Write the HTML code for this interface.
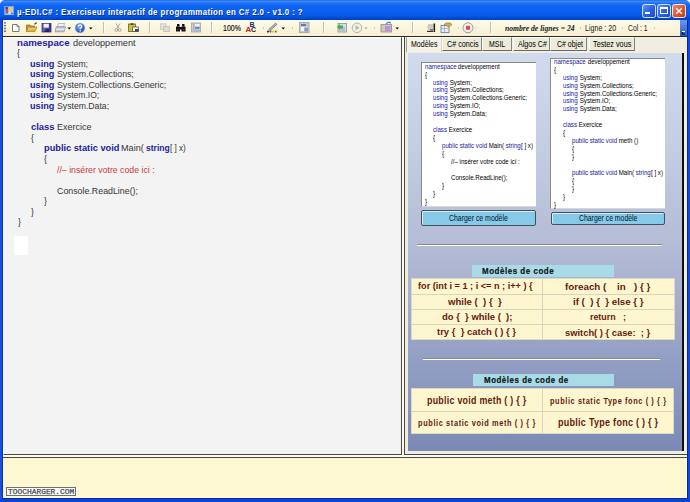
<!DOCTYPE html>
<html><head><meta charset="utf-8">
<style>
*{margin:0;padding:0;box-sizing:border-box}
html,body{width:690px;height:502px;overflow:hidden;background:#0b44d6}
body{position:relative;font-family:"Liberation Sans",sans-serif}
.a{position:absolute}
.t{position:absolute;white-space:pre;transform-origin:0 0}
#title{left:0;top:0;width:690px;height:20px;background:linear-gradient(#0c5ad8 0px,#4490fa 1px,#2472f6 3px,#0e64f2 6px,#0a5eee 12px,#0658e8 16px,#004ad4 18px,#003ec0 20px)}
#toolbar{left:3px;top:20px;width:684px;height:16px;background:linear-gradient(#fefbec,#fcf5dc 50%,#f8efd2)}
#tbline{left:3px;top:36px;width:684px;height:1px;background:#2a2a2a}
#editor{left:3px;top:37px;width:399px;height:418px;background:#f3f3f3;border-right:1px solid #4a4a40;border-bottom:1px solid #4a4a40;border-left:1px solid #fff;border-top:1px solid #fff}
#split{left:402px;top:37px;width:2px;height:418px;background:#fbfbf4}
#panelc{left:404px;top:37px;width:283px;height:418px;background:#f1ede0;border-left:1px solid #4a4a40;border-bottom:1px solid #4a4a40}
#bline1{left:3px;top:455px;width:684px;height:2px;background:#fbfbf4}
#bline2{left:3px;top:457px;width:684px;height:1px;background:#4a4a40}
#bottom{left:3px;top:458px;width:684px;height:40px;background:#fdf7d2}
#blue{left:408px;top:53px;width:274px;height:398px;background:linear-gradient(#d2daee 0%,#c4cce2 25%,#b4bcd6 48%,#94a0c4 76%,#7b89b5 100%)}
#rline{left:682px;top:53px;width:2px;height:398px;background:#101010}
#wcur{left:14px;top:236px;width:14px;height:19px;background:#fff}
.tab{position:absolute;top:37px;height:14px;background:#ecead8;border-left:1px solid #fdfdf8;border-top:1px solid #fdfdf8;border-right:1px solid #85837a;border-bottom:1px solid #6e6c62}
.card{position:absolute;background:#fff;border-left:1px solid #8a8a8a;border-top:1px solid #8a8a8a;border-bottom:1px solid #d4d8e4;overflow:hidden}
.btn{position:absolute;background:#86c9e8;border:1px solid #40505e;border-radius:2px;box-shadow:inset 1px 1px 0 #d4eef8}
.sep{position:absolute;height:2px;border-top:1px solid #8a8a8a;border-bottom:1px solid #fff}
.lbl{position:absolute;background:#a9dbe6}
.tbl{position:absolute;background:#fef6cf;border:1px solid #dcd8c8}
.hl{position:absolute;height:1px;background:#d8d4c0}
.vl{position:absolute;width:1px;background:#d8d4c0}
#wm{left:6px;top:487px;width:70px;height:8.5px;background:#fff;border:1px solid #707070}
</style></head><body>
<div id="title" class="a"></div>
<div id="toolbar" class="a"></div>
<div id="tbline" class="a"></div>
<svg class="a" style="left:0;top:0" width="690" height="40" viewBox="0 0 690 40">
<defs>
<linearGradient id="gmin" x1="0" y1="0" x2="1" y2="1"><stop offset="0" stop-color="#6a9af8"/><stop offset="0.5" stop-color="#2a62e8"/><stop offset="1" stop-color="#1a48c8"/></linearGradient>
<linearGradient id="gcls" x1="0" y1="0" x2="1" y2="1"><stop offset="0" stop-color="#f08a68"/><stop offset="0.5" stop-color="#e05a34"/><stop offset="1" stop-color="#c83a18"/></linearGradient>
<radialGradient id="ghelp" cx="0.4" cy="0.35" r="0.7"><stop offset="0" stop-color="#8ab4f8"/><stop offset="0.6" stop-color="#3468d0"/><stop offset="1" stop-color="#2a4aa0"/></radialGradient>
<linearGradient id="gchev" x1="0" y1="0" x2="0" y2="1"><stop offset="0" stop-color="#6a98f0"/><stop offset="1" stop-color="#2a58c8"/></linearGradient>
<linearGradient id="gfold" x1="0" y1="0" x2="0" y2="1"><stop offset="0" stop-color="#f8dc80"/><stop offset="1" stop-color="#d8a030"/></linearGradient>
</defs>
<!-- rounded title corners -->
<path d="M0 0H4Q1 0.5 0 4Z" fill="#fff"/>
<path d="M690 0H686Q689 0.5 690 4Z" fill="#fff"/>
<!-- app icon -->
<rect x="4.3" y="6.3" width="9.4" height="8.6" fill="#a8c4f0"/>
<rect x="5.3" y="7" width="2.8" height="2" fill="#3a4aa0"/>
<rect x="5.5" y="9" width="2.6" height="4.5" fill="#a85a60"/>
<circle cx="10.6" cy="9.2" r="2.1" fill="#f0c860"/>
<rect x="8.6" y="11.5" width="4.4" height="2.6" fill="#c8dcf4"/>
<rect x="11" y="12.5" width="2" height="1.5" fill="#5a7ab8"/>
<!-- caption buttons -->
<rect x="642.5" y="4.5" width="13" height="13" rx="2" fill="url(#gmin)" stroke="#d4e2fc" stroke-width="1"/>
<rect x="645" y="12" width="5" height="2" fill="#fff"/>
<rect x="657.5" y="4.5" width="13" height="13" rx="2" fill="url(#gmin)" stroke="#d4e2fc" stroke-width="1"/>
<rect x="660.5" y="7.5" width="7" height="6" fill="none" stroke="#fff" stroke-width="1"/>
<rect x="660" y="7" width="8" height="2" fill="#fff"/>
<rect x="672.5" y="4.5" width="13" height="13" rx="2" fill="url(#gcls)" stroke="#f4e8e8" stroke-width="1"/>
<path d="M676.2 8.2L681.8 13.8M681.8 8.2L676.2 13.8" stroke="#fff" stroke-width="1.4"/>
<!-- chevron -->
<rect x="680" y="20" width="7" height="16" fill="url(#gchev)"/>
<path d="M681.5 33.5L684 31M682 34h3" stroke="#000" stroke-width="1"/>
<rect x="682" y="31" width="3" height="1" fill="#fff"/>
<!-- grip -->
<g fill="#5e5e58"><circle cx="5" cy="22.8" r="0.9"/><circle cx="5" cy="25.6" r="0.9"/><circle cx="5" cy="28.4" r="0.9"/><circle cx="5" cy="31.2" r="0.9"/></g>
<!-- new doc -->
<path d="M12.5 24.5H17L19 26.5V31.5H12.5Z" fill="#fbfbff" stroke="#7a7a80"/>
<path d="M17 24.5V26.5H19" fill="none" stroke="#7a7a80"/>
<!-- open folder -->
<path d="M26.5 31.5V25H30L31 26H34.5V28" fill="#c89838" stroke="#987020" stroke-width="0.8"/>
<path d="M26.3 31.6L28.2 27.2H37L34.8 31.6Z" fill="url(#gfold)" stroke="#b08028" stroke-width="0.8"/>
<path d="M34.5 24.2L36.8 22.6" stroke="#303030" stroke-width="1.1"/>
<!-- save -->
<rect x="42" y="23.4" width="9" height="8.6" fill="#5c5cb4" stroke="#303078" stroke-width="0.8"/>
<rect x="49.3" y="23.8" width="1.4" height="8" fill="#303080"/>
<rect x="43.6" y="23.8" width="5.2" height="3.8" fill="#f0f0fc"/>
<path d="M44 32L46.5 28.8H49V32Z" fill="#24245e"/>
<!-- printer -->
<path d="M58.5 23.5H64.8L63.2 26.8H57Z" fill="#f4f4f8" stroke="#9aa0b0" stroke-width="0.7"/>
<path d="M56.2 26.8H65.6L64.2 31.8H55Z" fill="#c0c4d0" stroke="#8a90a4" stroke-width="0.7"/>
<path d="M56.4 28.6H64.6L64.2 30H56Z" fill="#e8eaf0"/>
<path d="M67.5 27.5H71L69.25 29.5Z" fill="#000"/>
<!-- help -->
<circle cx="80" cy="28" r="4.8" fill="url(#ghelp)" stroke="#8aa8e0" stroke-width="0.6"/>
<path d="M78.3 26.5Q78.5 24.8 80.2 24.8Q82 25 81.8 26.6Q81.5 27.7 80.2 28.3V29.2" fill="none" stroke="#fff" stroke-width="1.2"/>
<rect x="79.6" y="30.2" width="1.3" height="1.3" fill="#fff"/>
<path d="M89 27.5H92.5L90.75 29.5Z" fill="#000"/>
<!-- separators -->
<g fill="#c4c0ac"><rect x="103" y="22" width="1" height="11"/><rect x="149" y="22" width="1" height="11"/><rect x="211" y="22" width="1" height="11"/><rect x="323" y="22" width="1" height="11"/><rect x="412" y="22" width="1" height="11"/><rect x="490" y="22" width="1" height="11"/></g>
<g fill="#fff"><rect x="104" y="22" width="1" height="11"/><rect x="150" y="22" width="1" height="11"/><rect x="212" y="22" width="1" height="11"/><rect x="324" y="22" width="1" height="11"/><rect x="413" y="22" width="1" height="11"/><rect x="491" y="22" width="1" height="11"/></g>
<g fill="#d0ccc0"><rect x="263" y="27" width="1" height="2"/><rect x="292" y="27" width="1" height="2"/><rect x="374" y="27" width="1" height="2"/><rect x="458" y="27" width="1" height="2"/><rect x="580" y="27" width="1" height="2"/><rect x="622" y="27" width="1" height="2"/><rect x="654" y="27" width="1" height="2"/></g>
<!-- scissors grayed -->
<g fill="none" stroke="#a8a8a0" stroke-width="1"><path d="M116 23.5L119 28.5M120 23.5L117 28.5"/><circle cx="116.3" cy="30" r="1.4"/><circle cx="119.7" cy="30" r="1.4"/></g>
<!-- paste -->
<rect x="128.5" y="24" width="7" height="7.5" fill="#d4c040" stroke="#6a6020" stroke-width="0.8"/>
<rect x="130.5" y="23.3" width="3" height="1.6" fill="#404040"/>
<rect x="132.5" y="27" width="6" height="4.5" fill="#fff" stroke="#505060" stroke-width="0.8"/>
<rect x="135" y="29" width="3.5" height="2.5" fill="#3a4a3a"/>
<!-- copy grayed -->
<rect x="160.5" y="23.8" width="5.5" height="5.5" fill="#e4e4dc" stroke="#c4c4bc" stroke-width="0.8"/>
<rect x="163.5" y="26.5" width="6" height="5" fill="#dcdcd4" stroke="#c0c0b8" stroke-width="0.8"/>
<!-- binoculars -->
<g fill="#101010"><rect x="177" y="24" width="2.5" height="2.5"/><rect x="182" y="24" width="2.5" height="2.5"/><rect x="176" y="26.5" width="4" height="5"/><rect x="181.5" y="26.5" width="4" height="5"/><rect x="179.5" y="27" width="2.5" height="2.5"/></g>
<rect x="177" y="29" width="1.2" height="1.2" fill="#505050"/><rect x="183" y="29" width="1.2" height="1.2" fill="#505050"/>
<!-- doc icon -->
<rect x="191.5" y="23" width="9" height="9" fill="#c8ccd8" stroke="#9ea2b0" stroke-width="0.8"/>
<rect x="193" y="24" width="1.5" height="7" fill="#d8a8b0"/>
<rect x="195" y="24" width="4.5" height="2" fill="#f0f4ff"/><rect x="195" y="27" width="4.5" height="2" fill="#7a8aa8"/><rect x="195" y="30" width="4.5" height="1.5" fill="#9ab8d8"/>
<!-- ABC -->
<text x="245.5" y="31.5" font-family="Liberation Sans" font-weight="bold" font-size="8" fill="#c02020">A</text>
<text x="249.5" y="27" font-family="Liberation Sans" font-weight="bold" font-size="7" fill="#1a2a6a">B</text>
<text x="251" y="32" font-family="Liberation Sans" font-weight="bold" font-size="7" fill="#1a1a2a">C</text>
<!-- brush -->
<path d="M276.5 23.5L269 30.5" stroke="#8a8a90" stroke-width="2.4"/>
<path d="M276.5 23.5L269 30.5" stroke="#d0d0d8" stroke-width="0.8"/>
<circle cx="268" cy="31.6" r="1.1" fill="#2a3a7a"/><circle cx="270.5" cy="31.6" r="1.1" fill="#c03a4a"/><circle cx="273" cy="31.6" r="1.1" fill="#e8c020"/><circle cx="275.8" cy="31.6" r="1.1" fill="#30a030"/>
<path d="M281.5 27.5H285L283.25 29.5Z" fill="#000"/>
<!-- doc icon 2 -->
<rect x="299.5" y="22.5" width="9.5" height="10" fill="#c4cad8" stroke="#98a0b0" stroke-width="0.8"/>
<rect x="301" y="24" width="5" height="2" fill="#687898"/><rect x="301" y="27" width="3" height="4" fill="#f4f6ff"/><rect x="304.5" y="28" width="3.5" height="3.5" fill="#889ab8"/>
<!-- green arrow doc -->
<rect x="338" y="23.5" width="8.5" height="8.5" fill="#d8dce8" stroke="#8a90a0" stroke-width="0.8"/>
<rect x="339.5" y="27" width="5.5" height="4" fill="#b8c0d0"/>
<path d="M337 27L340 24V25.5H343V28.5H340V30Z" fill="#40b040"/>
<!-- play grayed -->
<circle cx="357" cy="27.8" r="4.8" fill="#f0eee4" stroke="#b4b4ac" stroke-width="1"/>
<path d="M355.5 25.3L359.5 27.8L355.5 30.3Z" fill="#b8b8b0"/>
<path d="M364.5 27.5H367.5L366 29.3Z" fill="#a0a0a0"/>
<!-- purple icon -->
<rect x="381" y="24.5" width="10.5" height="7.5" fill="#c8c8d0" stroke="#8a8a9a" stroke-width="0.8"/>
<rect x="385" y="26" width="5.5" height="5" fill="#c090d8"/>
<circle cx="383.5" cy="28" r="1.2" fill="#f0d030"/>
<path d="M386 24Q388 21.5 391 23" fill="none" stroke="#3a7ad8" stroke-width="1.2"/>
<path d="M395.5 27.5H399L397.25 29.5Z" fill="#000"/>
<!-- lines icon -->
<g fill="#a0a0b0"><rect x="428" y="24.5" width="5" height="1"/><rect x="427" y="26.5" width="6" height="1"/><rect x="428" y="28.5" width="5" height="1"/></g>
<g fill="#202020"><rect x="427" y="30.8" width="6" height="1.1"/><rect x="433.5" y="23.5" width="1.6" height="8.5"/><rect x="430" y="29.5" width="3" height="0.8"/></g>
<!-- grid icon -->
<rect x="441" y="25.5" width="8" height="7" fill="#e8eef8" stroke="#5a78a8" stroke-width="0.8"/>
<path d="M441 28.5H449M444.5 25.5V32.5" stroke="#8aa0c8" stroke-width="0.7"/>
<path d="M444 24.5Q446 22 450 23L452 24.5L449 27Z" fill="#d8b040" stroke="#907020" stroke-width="0.6"/>
<!-- stop -->
<circle cx="468" cy="27.8" r="5" fill="#f4f0e6" stroke="#9a9a94" stroke-width="1"/>
<rect x="466" y="25.8" width="4" height="4" fill="#e04868"/>
</svg>

<div id="editor" class="a"></div>
<div id="wcur" class="a"></div>
<div id="split" class="a"></div>
<div id="panelc" class="a"></div>
<div class="tab" style="left:406px;width:36px;height:15px;background:#f4f2e6;border-bottom:none;border-left:1px solid #a4a496;border-right:1px solid #d8d6c8"></div>
<div class="tab" style="left:442px;width:40px"></div>
<div class="tab" style="left:482px;width:30px"></div>
<div class="tab" style="left:513px;width:37px"></div>
<div class="tab" style="left:550px;width:37px"></div>
<div class="tab" style="left:589px;width:46px"></div>
<div id="blue" class="a"></div>
<div id="rline" class="a"></div>
<div class="card" style="left:421px;top:62px;width:115px;height:145px"></div>
<div class="card" style="left:550px;top:58px;width:115px;height:151px"></div>
<div class="btn" style="left:421px;top:210px;width:115px;height:15.5px"></div>
<div class="btn" style="left:551px;top:212px;width:114px;height:13px"></div>
<div class="sep" style="left:417px;top:244px;width:245px"></div>
<div class="sep" style="left:423px;top:358px;width:237px"></div>
<div class="lbl" style="left:472px;top:265px;width:142px;height:12px"></div>
<div class="lbl" style="left:473px;top:374px;width:141px;height:12px"></div>
<div class="tbl" style="left:411px;top:278px;width:264px;height:62px"></div>
<div class="hl" style="left:412px;top:294px;width:262px"></div>
<div class="hl" style="left:412px;top:309px;width:262px"></div>
<div class="hl" style="left:412px;top:324px;width:262px"></div>
<div class="vl" style="left:542px;top:279px;height:60px"></div>
<div class="tbl" style="left:411px;top:388px;width:263px;height:46px"></div>
<div class="hl" style="left:412px;top:411px;width:261px"></div>
<div class="vl" style="left:542px;top:389px;height:44px"></div>
<div id="bline1" class="a"></div>
<div id="bline2" class="a"></div>
<div id="bottom" class="a"></div>
<div id="wm" class="a"></div>
<div class="a" style="left:0;top:20px;width:2px;height:482px;background:#1a4ee2"></div>
<div class="a" style="left:2px;top:20px;width:1px;height:480px;background:#0636b8"></div>
<div class="a" style="left:688px;top:20px;width:2px;height:482px;background:#1446d8"></div>
<div class="a" style="left:687px;top:20px;width:1px;height:479px;background:#0228a6"></div>
<div class="a" style="left:2px;top:498px;width:686px;height:1px;background:#0228a6"></div>
<div class="a" style="left:0;top:499px;width:690px;height:3px;background:#1042d4"></div>
<div class="a" style="left:3px;top:497px;width:684px;height:1px;background:#fdfbee"></div>
<div class="a" style="left:686px;top:458px;width:1px;height:40px;background:#fdfbee"></div>
<div class="t" style="left:16.80px;top:6.80px;line-height:9.5px;font-family:'Liberation Sans';font-size:9.5px;font-weight:bold;font-style:normal;letter-spacing:0.5px;color:#fff;transform:scaleX(0.8275);text-shadow:1px 1px 0 #0a3090;">µ-EDI.C# : Exerciseur interactif de programmation en C# 2.0 - v1.0 : ?</div>
<div class="t" style="left:222.80px;top:23.80px;line-height:8.5px;font-family:'Liberation Sans';font-size:8.5px;font-weight:normal;font-style:normal;letter-spacing:0px;color:#111111;transform:scaleX(0.8276);-webkit-text-stroke:0.15px #111;">100%</div>
<div class="t" style="left:504.60px;top:24.00px;line-height:9px;font-family:'Liberation Serif';font-size:9px;font-weight:bold;font-style:italic;letter-spacing:0px;color:#202020;transform:scaleX(0.8473);">nombre de lignes = 24</div>
<div class="t" style="left:584.80px;top:23.60px;line-height:8.5px;font-family:'Liberation Sans';font-size:8.5px;font-weight:normal;font-style:normal;letter-spacing:0px;color:#222222;transform:scaleX(0.8355);">Ligne : 20</div>
<div class="t" style="left:627.80px;top:23.60px;line-height:8.5px;font-family:'Liberation Sans';font-size:8.5px;font-weight:normal;font-style:normal;letter-spacing:0px;color:#222222;transform:scaleX(0.7975);">Col : 1</div>
<div class="t" style="left:17.40px;top:37.60px;line-height:9.5px;font-family:'Liberation Sans';font-size:9.5px;font-weight:bold;font-style:normal;letter-spacing:0px;color:#22229c;transform:scaleX(1.0161);">namespace</div>
<div class="t" style="left:73.00px;top:37.60px;line-height:9.5px;font-family:'Liberation Sans';font-size:9.5px;font-weight:normal;font-style:normal;letter-spacing:0px;color:#363636;transform:scaleX(0.9635);">developpement</div>
<div class="t" style="left:17.40px;top:48.17px;line-height:9.5px;font-family:'Liberation Sans';font-size:9.5px;font-weight:normal;font-style:normal;letter-spacing:0px;color:#363636;transform:scaleX(0.9200);">{</div>
<div class="t" style="left:30.40px;top:58.74px;line-height:9.5px;font-family:'Liberation Sans';font-size:9.5px;font-weight:bold;font-style:normal;letter-spacing:0px;color:#22229c;transform:scaleX(0.9628);">using</div>
<div class="t" style="left:57.00px;top:58.74px;line-height:9.5px;font-family:'Liberation Sans';font-size:9.5px;font-weight:normal;font-style:normal;letter-spacing:0px;color:#363636;transform:scaleX(0.9005);">System;</div>
<div class="t" style="left:30.40px;top:69.31px;line-height:9.5px;font-family:'Liberation Sans';font-size:9.5px;font-weight:bold;font-style:normal;letter-spacing:0px;color:#22229c;transform:scaleX(0.9628);">using</div>
<div class="t" style="left:57.00px;top:69.31px;line-height:9.5px;font-family:'Liberation Sans';font-size:9.5px;font-weight:normal;font-style:normal;letter-spacing:0px;color:#363636;transform:scaleX(0.9206);">System.Collections;</div>
<div class="t" style="left:30.40px;top:79.88px;line-height:9.5px;font-family:'Liberation Sans';font-size:9.5px;font-weight:bold;font-style:normal;letter-spacing:0px;color:#22229c;transform:scaleX(0.9628);">using</div>
<div class="t" style="left:57.00px;top:79.88px;line-height:9.5px;font-family:'Liberation Sans';font-size:9.5px;font-weight:normal;font-style:normal;letter-spacing:0px;color:#363636;transform:scaleX(0.9151);">System.Collections.Generic;</div>
<div class="t" style="left:30.40px;top:90.45px;line-height:9.5px;font-family:'Liberation Sans';font-size:9.5px;font-weight:bold;font-style:normal;letter-spacing:0px;color:#22229c;transform:scaleX(0.9628);">using</div>
<div class="t" style="left:57.00px;top:90.45px;line-height:9.5px;font-family:'Liberation Sans';font-size:9.5px;font-weight:normal;font-style:normal;letter-spacing:0px;color:#363636;transform:scaleX(0.8982);">System.IO;</div>
<div class="t" style="left:30.40px;top:101.02px;line-height:9.5px;font-family:'Liberation Sans';font-size:9.5px;font-weight:bold;font-style:normal;letter-spacing:0px;color:#22229c;transform:scaleX(0.9628);">using</div>
<div class="t" style="left:57.00px;top:101.02px;line-height:9.5px;font-family:'Liberation Sans';font-size:9.5px;font-weight:normal;font-style:normal;letter-spacing:0px;color:#363636;transform:scaleX(0.9135);">System.Data;</div>
<div class="t" style="left:30.80px;top:122.16px;line-height:9.5px;font-family:'Liberation Sans';font-size:9.5px;font-weight:bold;font-style:normal;letter-spacing:0px;color:#22229c;transform:scaleX(0.9924);">class</div>
<div class="t" style="left:56.80px;top:122.16px;line-height:9.5px;font-family:'Liberation Sans';font-size:9.5px;font-weight:normal;font-style:normal;letter-spacing:0px;color:#363636;transform:scaleX(0.9441);">Exercice</div>
<div class="t" style="left:30.80px;top:132.73px;line-height:9.5px;font-family:'Liberation Sans';font-size:9.5px;font-weight:normal;font-style:normal;letter-spacing:0px;color:#363636;transform:scaleX(0.9200);">{</div>
<div class="t" style="left:44.20px;top:143.30px;line-height:9.5px;font-family:'Liberation Sans';font-size:9.5px;font-weight:bold;font-style:normal;letter-spacing:0px;color:#22229c;transform:scaleX(0.9715);">public static void</div>
<div class="t" style="left:121.20px;top:143.30px;line-height:9.5px;font-family:'Liberation Sans';font-size:9.5px;font-weight:normal;font-style:normal;letter-spacing:0px;color:#363636;transform:scaleX(0.9594);">Main(</div>
<div class="t" style="left:146.30px;top:143.30px;line-height:9.5px;font-family:'Liberation Sans';font-size:9.5px;font-weight:bold;font-style:normal;letter-spacing:0px;color:#22229c;transform:scaleX(0.8980);">string</div>
<div class="t" style="left:170.40px;top:143.30px;line-height:9.5px;font-family:'Liberation Sans';font-size:9.5px;font-weight:normal;font-style:normal;letter-spacing:0px;color:#363636;transform:scaleX(0.8548);">[ ] x)</div>
<div class="t" style="left:44.20px;top:153.87px;line-height:9.5px;font-family:'Liberation Sans';font-size:9.5px;font-weight:normal;font-style:normal;letter-spacing:0px;color:#363636;transform:scaleX(0.9200);">{</div>
<div class="t" style="left:57.20px;top:164.84px;line-height:9.5px;font-family:'Liberation Sans';font-size:9.5px;font-weight:normal;font-style:normal;letter-spacing:0px;color:#c83a3a;transform:scaleX(0.9195);">//– insérer votre code ici :</div>
<div class="t" style="left:56.80px;top:185.58px;line-height:9.5px;font-family:'Liberation Sans';font-size:9.5px;font-weight:normal;font-style:normal;letter-spacing:0px;color:#363636;transform:scaleX(0.9295);">Console.ReadLine();</div>
<div class="t" style="left:44.20px;top:196.15px;line-height:9.5px;font-family:'Liberation Sans';font-size:9.5px;font-weight:normal;font-style:normal;letter-spacing:0px;color:#363636;transform:scaleX(0.9200);">}</div>
<div class="t" style="left:30.80px;top:206.72px;line-height:9.5px;font-family:'Liberation Sans';font-size:9.5px;font-weight:normal;font-style:normal;letter-spacing:0px;color:#363636;transform:scaleX(0.9200);">}</div>
<div class="t" style="left:17.60px;top:217.29px;line-height:9.5px;font-family:'Liberation Sans';font-size:9.5px;font-weight:normal;font-style:normal;letter-spacing:0px;color:#363636;transform:scaleX(0.9200);">}</div>
<div class="t" style="left:7.60px;top:487.80px;line-height:8px;font-family:'Liberation Mono';font-size:8px;font-weight:normal;font-style:normal;letter-spacing:0px;color:#484848;transform:scaleX(0.9863);-webkit-text-stroke:0.25px #484848;">TOOCHARGER.COM</div>
<div class="t" style="left:410.90px;top:39.50px;line-height:9px;font-family:'Liberation Sans';font-size:9px;font-weight:normal;font-style:normal;letter-spacing:0px;color:#000000;transform:scaleX(0.7787);">Modèles</div>
<div class="t" style="left:447.00px;top:39.50px;line-height:9px;font-family:'Liberation Sans';font-size:9px;font-weight:normal;font-style:normal;letter-spacing:0px;color:#000000;transform:scaleX(0.7997);">C# concis</div>
<div class="t" style="left:488.70px;top:39.50px;line-height:9px;font-family:'Liberation Sans';font-size:9px;font-weight:normal;font-style:normal;letter-spacing:0px;color:#000000;transform:scaleX(0.7709);">MSIL</div>
<div class="t" style="left:518.30px;top:39.50px;line-height:9px;font-family:'Liberation Sans';font-size:9px;font-weight:normal;font-style:normal;letter-spacing:0px;color:#000000;transform:scaleX(0.7938);">Algos C#</div>
<div class="t" style="left:557.00px;top:39.50px;line-height:9px;font-family:'Liberation Sans';font-size:9px;font-weight:normal;font-style:normal;letter-spacing:0px;color:#000000;transform:scaleX(0.7754);">C# objet</div>
<div class="t" style="left:593.00px;top:39.50px;line-height:9px;font-family:'Liberation Sans';font-size:9px;font-weight:normal;font-style:normal;letter-spacing:0px;color:#000000;transform:scaleX(0.8058);">Testez vous</div>
<div class="t" style="left:448.90px;top:214.20px;line-height:8.5px;font-family:'Liberation Sans';font-size:8.5px;font-weight:normal;font-style:normal;letter-spacing:0px;color:#001428;transform:scaleX(0.8133);">Charger ce modèle</div>
<div class="t" style="left:578.90px;top:214.30px;line-height:8.5px;font-family:'Liberation Sans';font-size:8.5px;font-weight:normal;font-style:normal;letter-spacing:0px;color:#001428;transform:scaleX(0.8078);">Charger ce modèle</div>
<div class="t" style="left:481.70px;top:266.80px;line-height:9px;font-family:'Liberation Sans';font-size:9px;font-weight:bold;font-style:normal;letter-spacing:0.6px;color:#101418;transform:scaleX(0.8856);-webkit-text-stroke:0.2px #101418;">Modèles de code</div>
<div class="t" style="left:484.00px;top:375.50px;line-height:9px;font-family:'Liberation Sans';font-size:9px;font-weight:bold;font-style:normal;letter-spacing:0.6px;color:#101418;transform:scaleX(0.8803);-webkit-text-stroke:0.2px #101418;">Modèles de code de</div>
<div class="t" style="left:418.10px;top:281.60px;line-height:9px;font-family:'Liberation Sans';font-size:9px;font-weight:bold;font-style:normal;letter-spacing:0px;color:#641a10;transform:scaleX(1.0161);">for (int i = 1 ; i &lt;= n ; i++ ) {</div>
<div class="t" style="left:447.60px;top:297.80px;line-height:9px;font-family:'Liberation Sans';font-size:9px;font-weight:bold;font-style:normal;letter-spacing:0px;color:#641a10;transform:scaleX(1.0630);">while (  ) {  }</div>
<div class="t" style="left:441.50px;top:313.20px;line-height:9px;font-family:'Liberation Sans';font-size:9px;font-weight:bold;font-style:normal;letter-spacing:0px;color:#641a10;transform:scaleX(1.0507);">do {  } while (  );</div>
<div class="t" style="left:437.40px;top:328.40px;line-height:9px;font-family:'Liberation Sans';font-size:9px;font-weight:bold;font-style:normal;letter-spacing:0px;color:#641a10;transform:scaleX(1.0529);">try {  } catch ( ) { }</div>
<div class="t" style="left:565.40px;top:282.60px;line-height:9px;font-family:'Liberation Sans';font-size:9px;font-weight:bold;font-style:normal;letter-spacing:0px;color:#641a10;transform:scaleX(1.0851);">foreach (    in   ) { }</div>
<div class="t" style="left:572.90px;top:297.80px;line-height:9px;font-family:'Liberation Sans';font-size:9px;font-weight:bold;font-style:normal;letter-spacing:0px;color:#641a10;transform:scaleX(1.0773);">if (  ) {  } else { }</div>
<div class="t" style="left:590.30px;top:313.00px;line-height:9px;font-family:'Liberation Sans';font-size:9px;font-weight:bold;font-style:normal;letter-spacing:0px;color:#641a10;transform:scaleX(0.9831);">return   ;</div>
<div class="t" style="left:565.40px;top:328.50px;line-height:9px;font-family:'Liberation Sans';font-size:9px;font-weight:bold;font-style:normal;letter-spacing:0px;color:#641a10;transform:scaleX(1.0386);">switch( ) { case:  ; }</div>
<div class="t" style="left:427.30px;top:395.90px;line-height:10px;font-family:'Liberation Sans';font-size:10px;font-weight:bold;font-style:normal;letter-spacing:0.3px;color:#641a10;transform:scaleX(0.8858);">public void meth ( ) { }</div>
<div class="t" style="left:418.10px;top:419.00px;line-height:8.5px;font-family:'Liberation Sans';font-size:8.5px;font-weight:bold;font-style:normal;letter-spacing:0.7px;color:#641a10;transform:scaleX(0.8706);">public static void meth ( ) { }</div>
<div class="t" style="left:550.20px;top:396.60px;line-height:8.5px;font-family:'Liberation Sans';font-size:8.5px;font-weight:bold;font-style:normal;letter-spacing:0.7px;color:#641a10;transform:scaleX(0.8644);">public static Type fonc ( ) { }</div>
<div class="t" style="left:558.30px;top:418.20px;line-height:10px;font-family:'Liberation Sans';font-size:10px;font-weight:bold;font-style:normal;letter-spacing:0.3px;color:#641a10;transform:scaleX(0.9007);">public Type fonc ( ) { }</div>
<div class="t" style="left:424.50px;top:62.60px;line-height:7.5px;font-family:'Liberation Sans';font-size:7.5px;font-weight:normal;font-style:normal;letter-spacing:0px;color:#2020a0;transform:scaleX(0.8200);">namespace</div>
<div class="t" style="left:456.30px;top:62.60px;line-height:7.5px;font-family:'Liberation Sans';font-size:7.5px;font-weight:normal;font-style:normal;letter-spacing:0px;color:#000000;transform:scaleX(0.8200);"> developpement</div>
<div class="t" style="left:424.50px;top:70.55px;line-height:7.5px;font-family:'Liberation Sans';font-size:7.5px;font-weight:normal;font-style:normal;letter-spacing:0px;color:#000000;transform:scaleX(0.8200);">{</div>
<div class="t" style="left:433.30px;top:78.50px;line-height:7.5px;font-family:'Liberation Sans';font-size:7.5px;font-weight:normal;font-style:normal;letter-spacing:0px;color:#2020a0;transform:scaleX(0.8200);">using</div>
<div class="t" style="left:448.01px;top:78.50px;line-height:7.5px;font-family:'Liberation Sans';font-size:7.5px;font-weight:normal;font-style:normal;letter-spacing:0px;color:#000000;transform:scaleX(0.8200);"> System;</div>
<div class="t" style="left:433.30px;top:86.45px;line-height:7.5px;font-family:'Liberation Sans';font-size:7.5px;font-weight:normal;font-style:normal;letter-spacing:0px;color:#2020a0;transform:scaleX(0.8200);">using</div>
<div class="t" style="left:448.01px;top:86.45px;line-height:7.5px;font-family:'Liberation Sans';font-size:7.5px;font-weight:normal;font-style:normal;letter-spacing:0px;color:#000000;transform:scaleX(0.8200);"> System.Collections;</div>
<div class="t" style="left:433.30px;top:94.40px;line-height:7.5px;font-family:'Liberation Sans';font-size:7.5px;font-weight:normal;font-style:normal;letter-spacing:0px;color:#2020a0;transform:scaleX(0.8200);">using</div>
<div class="t" style="left:448.01px;top:94.40px;line-height:7.5px;font-family:'Liberation Sans';font-size:7.5px;font-weight:normal;font-style:normal;letter-spacing:0px;color:#000000;transform:scaleX(0.8200);"> System.Collections.Generic;</div>
<div class="t" style="left:433.30px;top:102.35px;line-height:7.5px;font-family:'Liberation Sans';font-size:7.5px;font-weight:normal;font-style:normal;letter-spacing:0px;color:#2020a0;transform:scaleX(0.8200);">using</div>
<div class="t" style="left:448.01px;top:102.35px;line-height:7.5px;font-family:'Liberation Sans';font-size:7.5px;font-weight:normal;font-style:normal;letter-spacing:0px;color:#000000;transform:scaleX(0.8200);"> System.IO;</div>
<div class="t" style="left:433.30px;top:110.30px;line-height:7.5px;font-family:'Liberation Sans';font-size:7.5px;font-weight:normal;font-style:normal;letter-spacing:0px;color:#2020a0;transform:scaleX(0.8200);">using</div>
<div class="t" style="left:448.01px;top:110.30px;line-height:7.5px;font-family:'Liberation Sans';font-size:7.5px;font-weight:normal;font-style:normal;letter-spacing:0px;color:#000000;transform:scaleX(0.8200);"> System.Data;</div>
<div class="t" style="left:433.30px;top:126.20px;line-height:7.5px;font-family:'Liberation Sans';font-size:7.5px;font-weight:normal;font-style:normal;letter-spacing:0px;color:#2020a0;transform:scaleX(0.8200);">class</div>
<div class="t" style="left:447.32px;top:126.20px;line-height:7.5px;font-family:'Liberation Sans';font-size:7.5px;font-weight:normal;font-style:normal;letter-spacing:0px;color:#000000;transform:scaleX(0.8200);"> Exercice</div>
<div class="t" style="left:433.30px;top:134.15px;line-height:7.5px;font-family:'Liberation Sans';font-size:7.5px;font-weight:normal;font-style:normal;letter-spacing:0px;color:#000000;transform:scaleX(0.8200);">{</div>
<div class="t" style="left:442.10px;top:142.10px;line-height:7.5px;font-family:'Liberation Sans';font-size:7.5px;font-weight:normal;font-style:normal;letter-spacing:0px;color:#2020a0;transform:scaleX(0.8200);">public static void</div>
<div class="t" style="left:487.23px;top:142.10px;line-height:7.5px;font-family:'Liberation Sans';font-size:7.5px;font-weight:normal;font-style:normal;letter-spacing:0px;color:#000000;transform:scaleX(0.8200);"> Main(</div>
<div class="t" style="left:504.32px;top:142.10px;line-height:7.5px;font-family:'Liberation Sans';font-size:7.5px;font-weight:normal;font-style:normal;letter-spacing:0px;color:#2020a0;transform:scaleX(0.8200);"> string</div>
<div class="t" style="left:521.08px;top:142.10px;line-height:7.5px;font-family:'Liberation Sans';font-size:7.5px;font-weight:normal;font-style:normal;letter-spacing:0px;color:#000000;transform:scaleX(0.8200);">[ ] x)</div>
<div class="t" style="left:442.10px;top:150.05px;line-height:7.5px;font-family:'Liberation Sans';font-size:7.5px;font-weight:normal;font-style:normal;letter-spacing:0px;color:#000000;transform:scaleX(0.8200);">{</div>
<div class="t" style="left:450.90px;top:158.00px;line-height:7.5px;font-family:'Liberation Sans';font-size:7.5px;font-weight:normal;font-style:normal;letter-spacing:0px;color:#000000;transform:scaleX(0.8200);">//– insérer votre code ici :</div>
<div class="t" style="left:450.90px;top:173.90px;line-height:7.5px;font-family:'Liberation Sans';font-size:7.5px;font-weight:normal;font-style:normal;letter-spacing:0px;color:#000000;transform:scaleX(0.8200);">Console.ReadLine();</div>
<div class="t" style="left:442.10px;top:181.85px;line-height:7.5px;font-family:'Liberation Sans';font-size:7.5px;font-weight:normal;font-style:normal;letter-spacing:0px;color:#000000;transform:scaleX(0.8200);">}</div>
<div class="t" style="left:433.30px;top:189.80px;line-height:7.5px;font-family:'Liberation Sans';font-size:7.5px;font-weight:normal;font-style:normal;letter-spacing:0px;color:#000000;transform:scaleX(0.8200);">}</div>
<div class="t" style="left:424.50px;top:197.75px;line-height:7.5px;font-family:'Liberation Sans';font-size:7.5px;font-weight:normal;font-style:normal;letter-spacing:0px;color:#000000;transform:scaleX(0.8200);">}</div>
<div class="t" style="left:554.00px;top:57.70px;line-height:7.5px;font-family:'Liberation Sans';font-size:7.5px;font-weight:normal;font-style:normal;letter-spacing:0px;color:#2020a0;transform:scaleX(0.8200);">namespace</div>
<div class="t" style="left:585.80px;top:57.70px;line-height:7.5px;font-family:'Liberation Sans';font-size:7.5px;font-weight:normal;font-style:normal;letter-spacing:0px;color:#000000;transform:scaleX(0.8200);"> developpement</div>
<div class="t" style="left:554.00px;top:65.65px;line-height:7.5px;font-family:'Liberation Sans';font-size:7.5px;font-weight:normal;font-style:normal;letter-spacing:0px;color:#000000;transform:scaleX(0.8200);">{</div>
<div class="t" style="left:562.80px;top:73.60px;line-height:7.5px;font-family:'Liberation Sans';font-size:7.5px;font-weight:normal;font-style:normal;letter-spacing:0px;color:#2020a0;transform:scaleX(0.8200);">using</div>
<div class="t" style="left:577.51px;top:73.60px;line-height:7.5px;font-family:'Liberation Sans';font-size:7.5px;font-weight:normal;font-style:normal;letter-spacing:0px;color:#000000;transform:scaleX(0.8200);"> System;</div>
<div class="t" style="left:562.80px;top:81.55px;line-height:7.5px;font-family:'Liberation Sans';font-size:7.5px;font-weight:normal;font-style:normal;letter-spacing:0px;color:#2020a0;transform:scaleX(0.8200);">using</div>
<div class="t" style="left:577.51px;top:81.55px;line-height:7.5px;font-family:'Liberation Sans';font-size:7.5px;font-weight:normal;font-style:normal;letter-spacing:0px;color:#000000;transform:scaleX(0.8200);"> System.Collections;</div>
<div class="t" style="left:562.80px;top:89.50px;line-height:7.5px;font-family:'Liberation Sans';font-size:7.5px;font-weight:normal;font-style:normal;letter-spacing:0px;color:#2020a0;transform:scaleX(0.8200);">using</div>
<div class="t" style="left:577.51px;top:89.50px;line-height:7.5px;font-family:'Liberation Sans';font-size:7.5px;font-weight:normal;font-style:normal;letter-spacing:0px;color:#000000;transform:scaleX(0.8200);"> System.Collections.Generic;</div>
<div class="t" style="left:562.80px;top:97.45px;line-height:7.5px;font-family:'Liberation Sans';font-size:7.5px;font-weight:normal;font-style:normal;letter-spacing:0px;color:#2020a0;transform:scaleX(0.8200);">using</div>
<div class="t" style="left:577.51px;top:97.45px;line-height:7.5px;font-family:'Liberation Sans';font-size:7.5px;font-weight:normal;font-style:normal;letter-spacing:0px;color:#000000;transform:scaleX(0.8200);"> System.IO;</div>
<div class="t" style="left:562.80px;top:105.40px;line-height:7.5px;font-family:'Liberation Sans';font-size:7.5px;font-weight:normal;font-style:normal;letter-spacing:0px;color:#2020a0;transform:scaleX(0.8200);">using</div>
<div class="t" style="left:577.51px;top:105.40px;line-height:7.5px;font-family:'Liberation Sans';font-size:7.5px;font-weight:normal;font-style:normal;letter-spacing:0px;color:#000000;transform:scaleX(0.8200);"> System.Data;</div>
<div class="t" style="left:562.80px;top:121.30px;line-height:7.5px;font-family:'Liberation Sans';font-size:7.5px;font-weight:normal;font-style:normal;letter-spacing:0px;color:#2020a0;transform:scaleX(0.8200);">class</div>
<div class="t" style="left:576.82px;top:121.30px;line-height:7.5px;font-family:'Liberation Sans';font-size:7.5px;font-weight:normal;font-style:normal;letter-spacing:0px;color:#000000;transform:scaleX(0.8200);"> Exercice</div>
<div class="t" style="left:562.80px;top:129.25px;line-height:7.5px;font-family:'Liberation Sans';font-size:7.5px;font-weight:normal;font-style:normal;letter-spacing:0px;color:#000000;transform:scaleX(0.8200);">{</div>
<div class="t" style="left:571.60px;top:137.20px;line-height:7.5px;font-family:'Liberation Sans';font-size:7.5px;font-weight:normal;font-style:normal;letter-spacing:0px;color:#2020a0;transform:scaleX(0.8200);">public static void</div>
<div class="t" style="left:616.73px;top:137.20px;line-height:7.5px;font-family:'Liberation Sans';font-size:7.5px;font-weight:normal;font-style:normal;letter-spacing:0px;color:#000000;transform:scaleX(0.8200);"> meth ()</div>
<div class="t" style="left:571.60px;top:145.15px;line-height:7.5px;font-family:'Liberation Sans';font-size:7.5px;font-weight:normal;font-style:normal;letter-spacing:0px;color:#000000;transform:scaleX(0.8200);">{</div>
<div class="t" style="left:571.60px;top:153.10px;line-height:7.5px;font-family:'Liberation Sans';font-size:7.5px;font-weight:normal;font-style:normal;letter-spacing:0px;color:#000000;transform:scaleX(0.8200);">}</div>
<div class="t" style="left:571.60px;top:169.00px;line-height:7.5px;font-family:'Liberation Sans';font-size:7.5px;font-weight:normal;font-style:normal;letter-spacing:0px;color:#2020a0;transform:scaleX(0.8200);">public static void</div>
<div class="t" style="left:616.73px;top:169.00px;line-height:7.5px;font-family:'Liberation Sans';font-size:7.5px;font-weight:normal;font-style:normal;letter-spacing:0px;color:#000000;transform:scaleX(0.8200);"> Main(</div>
<div class="t" style="left:633.82px;top:169.00px;line-height:7.5px;font-family:'Liberation Sans';font-size:7.5px;font-weight:normal;font-style:normal;letter-spacing:0px;color:#2020a0;transform:scaleX(0.8200);"> string</div>
<div class="t" style="left:650.58px;top:169.00px;line-height:7.5px;font-family:'Liberation Sans';font-size:7.5px;font-weight:normal;font-style:normal;letter-spacing:0px;color:#000000;transform:scaleX(0.8200);">[ ] x)</div>
<div class="t" style="left:571.60px;top:176.95px;line-height:7.5px;font-family:'Liberation Sans';font-size:7.5px;font-weight:normal;font-style:normal;letter-spacing:0px;color:#000000;transform:scaleX(0.8200);">{</div>
<div class="t" style="left:571.60px;top:184.90px;line-height:7.5px;font-family:'Liberation Sans';font-size:7.5px;font-weight:normal;font-style:normal;letter-spacing:0px;color:#000000;transform:scaleX(0.8200);">}</div>
<div class="t" style="left:562.80px;top:192.85px;line-height:7.5px;font-family:'Liberation Sans';font-size:7.5px;font-weight:normal;font-style:normal;letter-spacing:0px;color:#000000;transform:scaleX(0.8200);">}</div>
<div class="t" style="left:554.00px;top:200.80px;line-height:7.5px;font-family:'Liberation Sans';font-size:7.5px;font-weight:normal;font-style:normal;letter-spacing:0px;color:#000000;transform:scaleX(0.8200);">}</div>
</body></html>
